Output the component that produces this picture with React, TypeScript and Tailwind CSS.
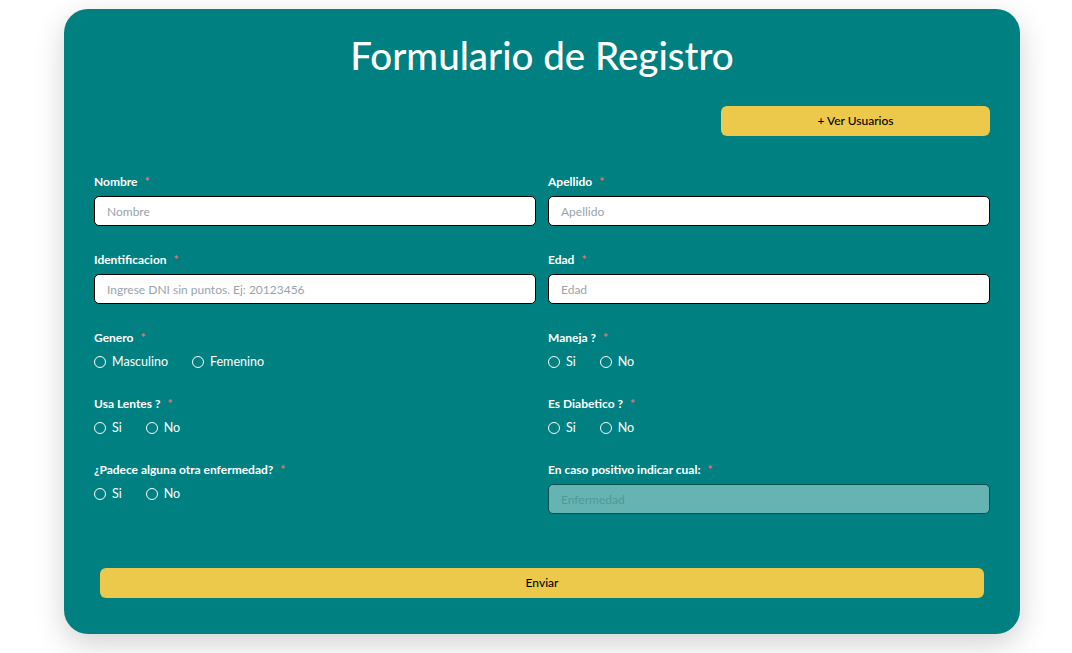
const font = { fontFamily: '"Lato", "Noto Sans", sans-serif' }

const Label = ({ text }: { text: string }) => (
  <label className="flex h-4 items-center text-[12px] font-bold leading-4 text-white">
    {text}
    <span className="ml-[7px] text-[#e57373]">*</span>
  </label>
)

const TextField = ({ label, placeholder, disabled }: { label: string; placeholder: string; disabled?: boolean }) => (
  <div className="flex flex-col">
    <Label text={label} />
    <input
      disabled={disabled}
      placeholder={placeholder}
      className={
        'mt-[6px] h-[30px] w-full rounded-[5px] border px-3 text-[12px] outline-none ' +
        (disabled
          ? 'border-[#0b4f4f] bg-[#66b3b3] placeholder:text-[#4c9a9a]'
          : 'border-black bg-white placeholder:text-[#9aa3ad]')
      }
      style={font}
    />
  </div>
)

const RadioField = ({ label, options }: { label: string; options: string[] }) => (
  <div className="flex flex-col">
    <Label text={label} />
    <div className="mt-[8px] flex h-4 items-center gap-6">
      {options.map((o) => (
        <label key={o} className="flex items-center gap-[6px] text-[12.5px] leading-4 text-white">
          <span className="h-3 w-3 rounded-full border border-white" />
          {o}
        </label>
      ))}
    </div>
  </div>
)

export default function App() {
  return (
    <div className="flex min-h-screen items-start justify-center bg-white pl-3 pt-[9px]" style={font}>
      <div className="w-[956px] rounded-3xl bg-[#008080] px-[30px] pb-[36px] pt-6 shadow-[0_10px_30px_rgba(0,0,0,0.18)]">
        <h1 className="text-center text-[38.5px] font-medium leading-[44px] text-white">Formulario de Registro</h1>

        <div className="mt-[29px] flex justify-end">
          <button className="h-[30px] w-[269px] rounded-md bg-[#ecc94b] text-[12px] font-medium text-black">
            + Ver Usuarios
          </button>
        </div>

        <div className="mt-[38px] grid grid-cols-2 gap-x-3 gap-y-[26px]">
          <TextField label="Nombre" placeholder="Nombre" />
          <TextField label="Apellido" placeholder="Apellido" />
          <TextField label="Identificacion" placeholder="Ingrese DNI sin puntos. Ej: 20123456" />
          <TextField label="Edad" placeholder="Edad" />
          <RadioField label="Genero" options={['Masculino', 'Femenino']} />
          <RadioField label="Maneja ?" options={['Si', 'No']} />
          <RadioField label="Usa Lentes ?" options={['Si', 'No']} />
          <RadioField label="Es Diabetico ?" options={['Si', 'No']} />
          <RadioField label="¿Padece alguna otra enfermedad?" options={['Si', 'No']} />
          <TextField label="En caso positivo indicar cual:" placeholder="Enfermedad" disabled />
        </div>

        <div className="mt-[54px] px-[6px]">
          <button className="h-[30px] w-full rounded-md bg-[#ecc94b] text-[12px] font-medium text-black">
            Enviar
          </button>
        </div>
      </div>
    </div>
  )
}
